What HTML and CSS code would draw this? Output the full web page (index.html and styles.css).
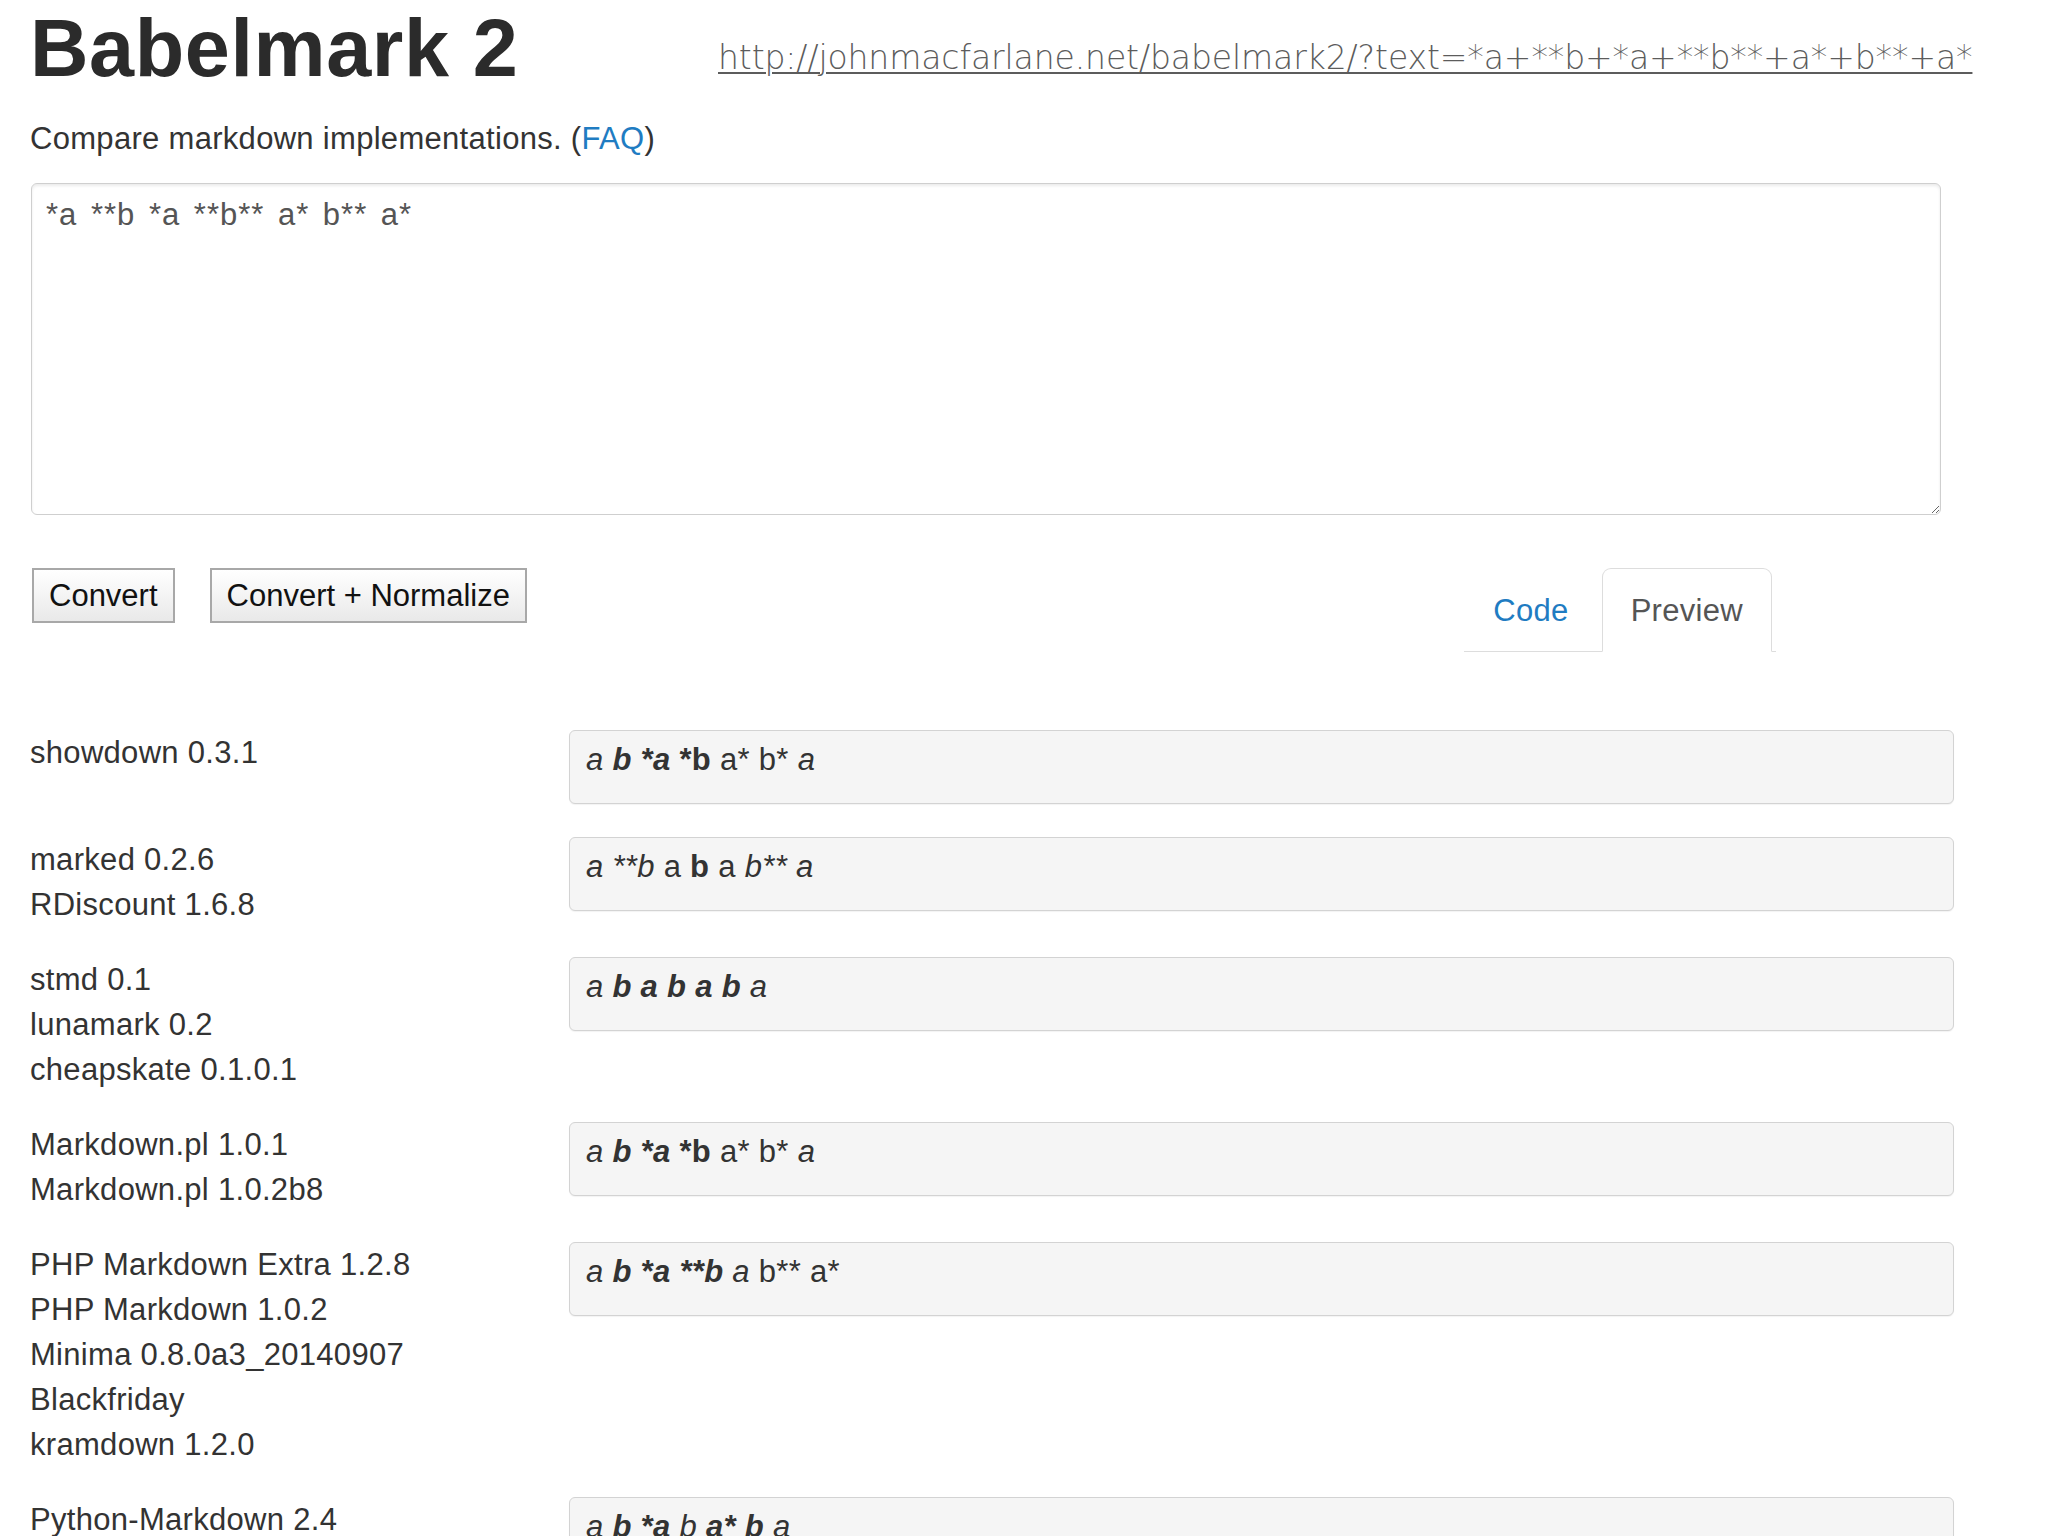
FILE: index.html
```html
<!DOCTYPE html>
<html lang="en">
<head>
<meta charset="utf-8">
<title>Babelmark 2</title>
<link rel="stylesheet" href="styles.css">
</head>
<body>
<div class="page">
  <header class="header">
    <h1 class="title">Babelmark 2</h1>
    <a class="permalink" href="#">http://johnmacfarlane.net/babelmark2/?text=*a+**b+*a+**b**+a*+b**+a*</a>
  </header>
  <p class="subtitle">Compare markdown implementations. (<a class="link" href="#">FAQ</a>)</p>
  <textarea class="source">*a **b *a **b** a* b** a*</textarea>
  <div class="toolbar">
    <div class="buttons">
      <button class="btn">Convert</button>
      <button class="btn">Convert + Normalize</button>
    </div>
    <ul class="tabs">
      <li class="tab"><a class="tab-link" href="#">Code</a></li>
      <li class="tab active"><a class="tab-link" href="#">Preview</a></li>
    </ul>
  </div>

  <div class="results">
    <div class="row">
      <div class="names"><div>showdown 0.3.1</div></div>
      <div class="output"><em>a <strong>b *a</strong></em> <strong>*b</strong> a* b* <em>a</em></div>
    </div>
    <div class="row">
      <div class="names"><div>marked 0.2.6</div><div>RDiscount 1.6.8</div></div>
      <div class="output"><em>a **b</em> a <strong>b</strong> a <em>b** a</em></div>
    </div>
    <div class="row">
      <div class="names"><div>stmd 0.1</div><div>lunamark 0.2</div><div>cheapskate 0.1.0.1</div></div>
      <div class="output"><em>a <strong>b a b a b</strong> a</em></div>
    </div>
    <div class="row">
      <div class="names"><div>Markdown.pl 1.0.1</div><div>Markdown.pl 1.0.2b8</div></div>
      <div class="output"><em>a <strong>b *a</strong></em> <strong>*b</strong> a* b* <em>a</em></div>
    </div>
    <div class="row">
      <div class="names"><div>PHP Markdown Extra 1.2.8</div><div>PHP Markdown 1.0.2</div><div>Minima 0.8.0a3_20140907</div><div>Blackfriday</div><div>kramdown 1.2.0</div></div>
      <div class="output"><em>a <strong>b *a **b</strong> a</em> b** a*</div>
    </div>
    <div class="row">
      <div class="names"><div>Python-Markdown 2.4</div></div>
      <div class="output"><em>a <strong>b *a</strong> b <strong>a* b</strong> a</em></div>
    </div>
  </div>
</div>
</body>
</html>
```
FILE: styles.css
```css
html, body {
  margin: 0;
  padding: 0;
  height: 100%;
  overflow: hidden;
  background: #ffffff;
}

body {
  font-family: "Liberation Sans", Arial, Helvetica, sans-serif;
  font-size: 31px;
  line-height: 45px;
  letter-spacing: 0.3px;
  color: #333333;
}

.page {
  width: 1924px;
  padding: 8px 0 0 30px;
}

.header {
  display: flex;
  align-items: flex-start;
}

.title {
  flex: 0 0 688px;
  margin: 0;
  font-size: 81px;
  line-height: 80px;
  font-weight: bold;
  color: #2b2b2b;
  letter-spacing: 0.6px;
}

.permalink {
  flex: 0 0 auto;
  margin-top: 33px;
  font-family: "DejaVu Sans", "Liberation Sans", sans-serif;
  font-weight: 200;
  font-size: 33px;
  line-height: 33px;
  letter-spacing: -0.1px;
  color: #5c5c5c;
  text-decoration: underline;
  text-decoration-thickness: 2px;
  text-underline-offset: 3px;
  white-space: nowrap;
}

.subtitle {
  margin: 28px 0 0 0;
  color: #333333;
}

.link {
  color: #1f7cc2;
  text-decoration: none;
}

.source {
  display: block;
  box-sizing: border-box;
  width: 1910px;
  height: 332px;
  margin: 22px 0 0 1px;
  padding: 8px 14px;
  border: 1px solid #cfcfcf;
  border-radius: 6px;
  box-shadow: inset 0 2px 3px rgba(0, 0, 0, 0.08);
  font-family: "Liberation Sans", Arial, Helvetica, sans-serif;
  font-size: 31px;
  line-height: 45px;
  letter-spacing: 1px;
  word-spacing: 4px;
  color: #555555;
  background: #ffffff;
  resize: both;
  outline: none;
}

.toolbar {
  display: flex;
  align-items: flex-start;
  margin-top: 53px;
}

.buttons {
  display: flex;
  gap: 35px;
  margin-left: 2px;
}

.btn {
  box-sizing: border-box;
  height: 55px;
  padding: 0 15px;
  border: 2px solid #a8a8a8;
  border-radius: 0;
  background: linear-gradient(#ffffff, #e9e9e9);
  font-family: "Liberation Sans", Arial, Helvetica, sans-serif;
  font-size: 31px;
  line-height: 51px;
  letter-spacing: 0;
  color: #111111;
}

.tabs {
  display: flex;
  margin: 0 178px 0 auto;
  padding: 0;
  list-style: none;
  border-bottom: 1px solid #dddddd;
}

.tab {
  margin: 0 4px -1px 0;
}

.tab-link {
  display: block;
  padding: 19px 28px 18px 28px;
  border: 1px solid transparent;
  border-radius: 9px 9px 0 0;
  line-height: 45px;
  color: #1f7cc2;
  text-decoration: none;
}

.tab.active .tab-link {
  border-color: #dddddd;
  border-bottom-color: transparent;
  background: #ffffff;
  color: #555555;
}

.results {
  margin-top: 78px;
}

.row {
  display: flex;
  align-items: flex-start;
}

.names {
  flex: 0 0 539px;
  padding-bottom: 30px;
  color: #333333;
}

.output {
  flex: 0 0 1385px;
  box-sizing: border-box;
  margin-bottom: 33px;
  padding: 6px 16px 21px 16px;
  border: 1px solid #d3d3d3;
  border-radius: 6px;
  background: #f5f5f5;
  box-shadow: 0 1px 1px rgba(0, 0, 0, 0.05);
  color: #333333;
  letter-spacing: 0.3px;
}

.output em {
  font-style: italic;
}

.output strong {
  font-weight: bold;
}
```
